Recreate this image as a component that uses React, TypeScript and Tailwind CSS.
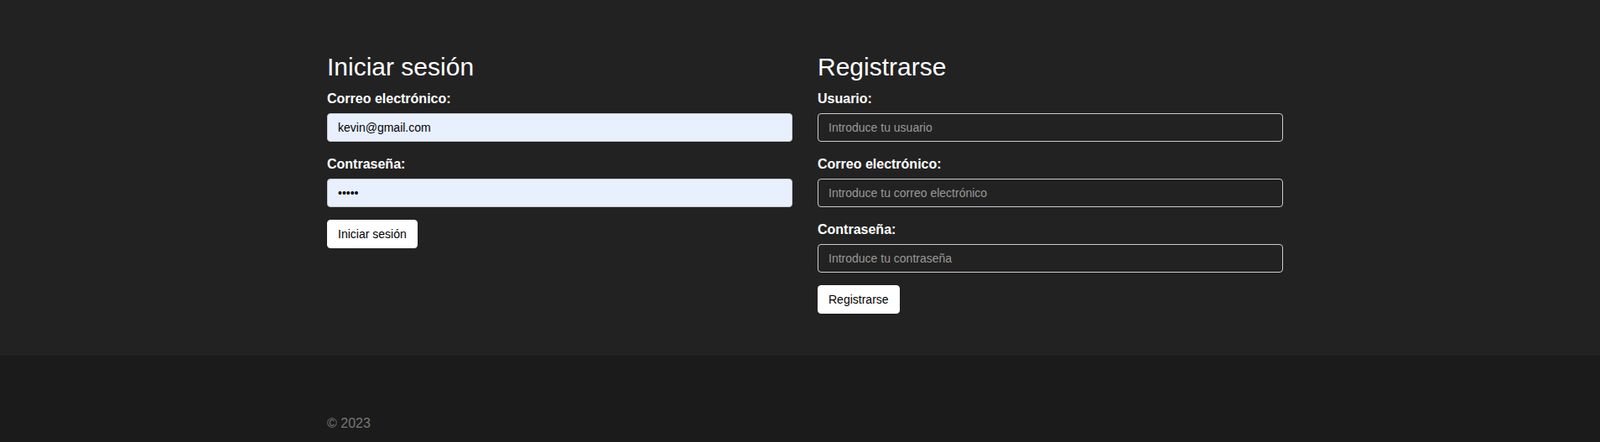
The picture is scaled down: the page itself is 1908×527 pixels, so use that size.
import { ReactNode } from 'react'

function Field({ label, children }: { label: string; children: ReactNode }) {
  return (
    <div className="mb-[15px]">
      <label className="block mb-[5px] text-base leading-6 font-bold text-white">
        {label}
      </label>
      {children}
    </div>
  )
}

const filledInput =
  'block w-full h-[34px] px-3 rounded-[4px] border border-[#ccc] bg-[#e8f0fe] text-sm text-black outline-none'

const emptyInput =
  'block w-full h-[34px] px-3 rounded-[4px] border border-[#ccc] bg-transparent text-sm text-white placeholder:text-[#999] outline-none'

const button =
  'h-[34px] px-3 rounded-[4px] border border-white bg-white text-sm text-black leading-5'

export default function App() {
  return (
    <div className="min-h-screen bg-[#1b1b1b] font-['Liberation_Sans',Arial,sans-serif]">
      <main className="bg-[#222222] pt-[63px] pb-[50px]">
        <div className="mx-auto w-[1152px] pl-3 grid grid-cols-2 gap-x-[30px]">
          <form onSubmit={e => e.preventDefault()}>
            <h2 className="mb-[10px] text-[30px] leading-[1.1] text-white">Iniciar sesión</h2>

            <Field label="Correo electrónico:">
              <input className={filledInput} type="email" defaultValue="kevin@gmail.com" />
            </Field>

            <Field label="Contraseña:">
              <input className={filledInput} type="password" defaultValue="12345" />
            </Field>

            <button className={button} type="submit">
              Iniciar sesión
            </button>
          </form>

          <form onSubmit={e => e.preventDefault()}>
            <h2 className="mb-[10px] text-[30px] leading-[1.1] text-white">Registrarse</h2>

            <Field label="Usuario:">
              <input className={emptyInput} type="text" placeholder="Introduce tu usuario" />
            </Field>

            <Field label="Correo electrónico:">
              <input className={emptyInput} type="email" placeholder="Introduce tu correo electrónico" />
            </Field>

            <Field label="Contraseña:">
              <input className={emptyInput} type="password" placeholder="Introduce tu contraseña" />
            </Field>

            <button className={button} type="submit">
              Registrarse
            </button>
          </form>
        </div>
      </main>

      <footer className="pt-[69px] pb-[10px]">
        <div className="mx-auto w-[1152px] pl-3">
          <p className="text-base leading-6 text-[#777]">© 2023</p>
        </div>
      </footer>
    </div>
  )
}
